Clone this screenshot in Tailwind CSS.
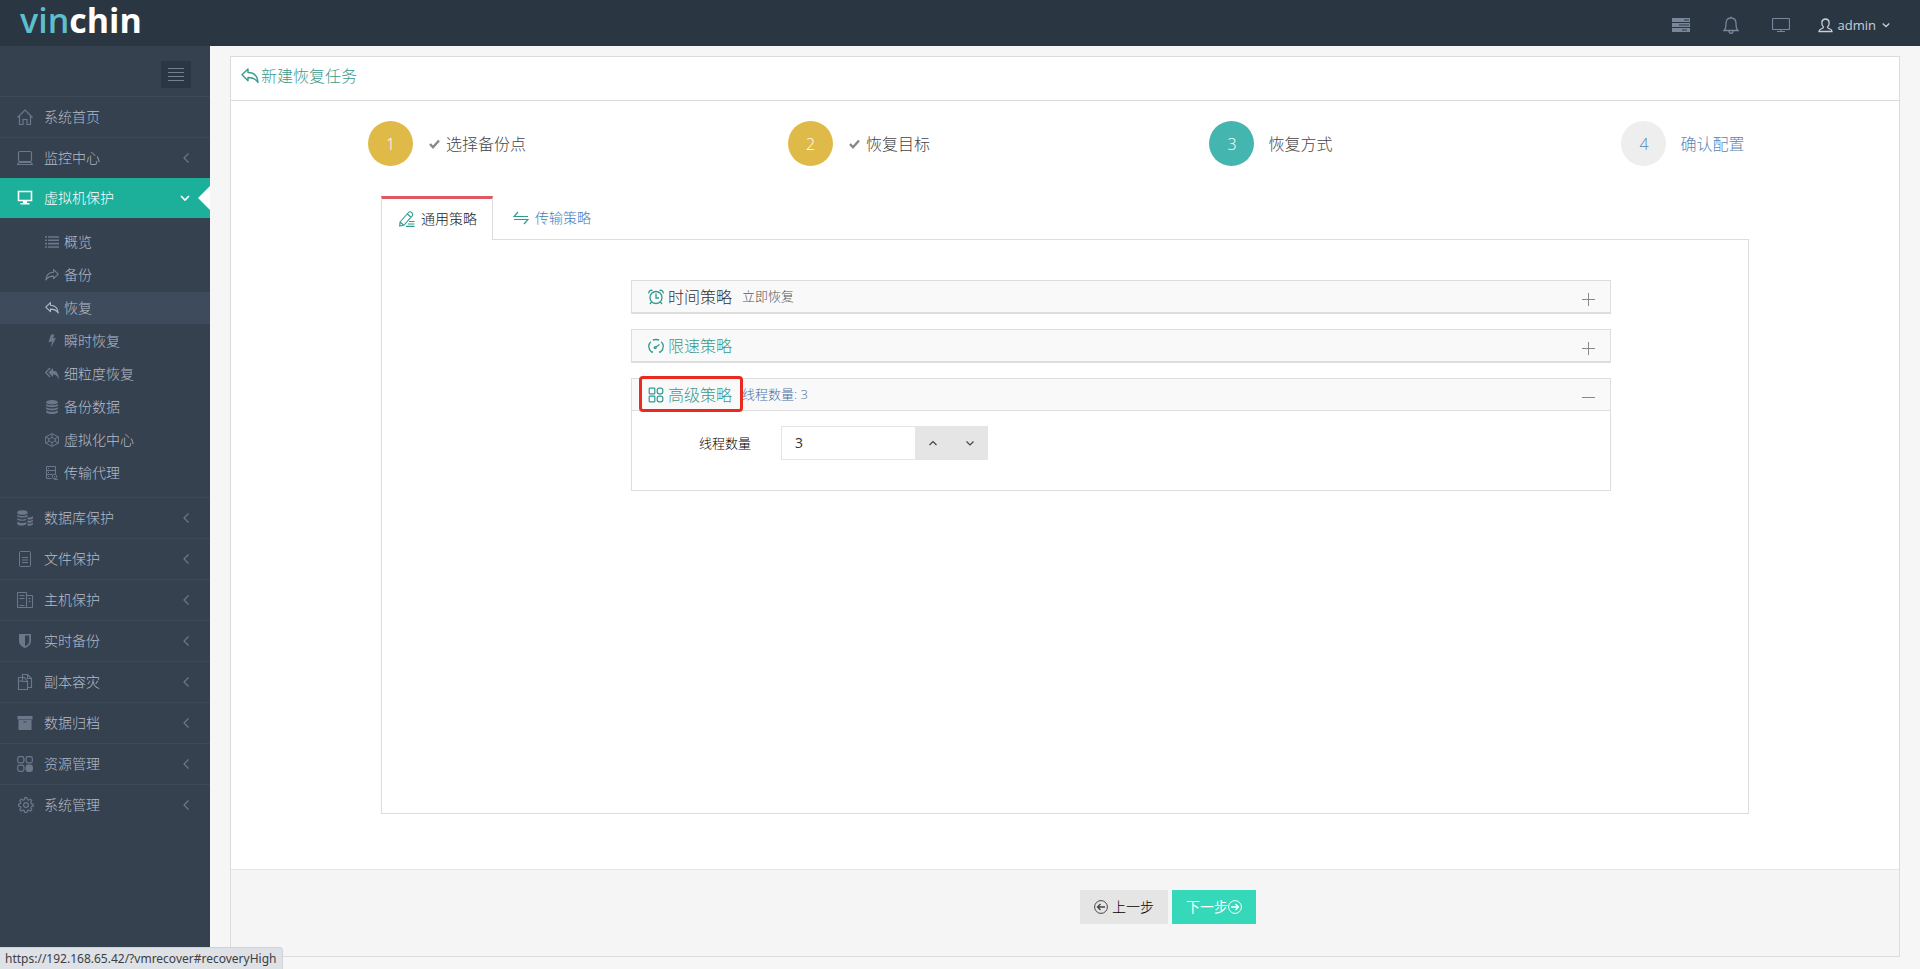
<!DOCTYPE html>
<html lang="zh-CN">
<head>
<meta charset="utf-8">
<meta name="viewport" content="width=device-width, initial-scale=1">
<title>新建恢复任务</title>
<script src="https://cdn.jsdelivr.net/npm/@tailwindcss/browser@4"></script>
</head>
<body class="flex min-h-screen flex-col bg-[#f6f6f6] font-['Open_Sans','Noto_Sans_CJK_SC',sans-serif] text-sm font-light text-[#333]">

<svg class="hidden" aria-hidden="true">
  <symbol id="left" viewBox="0 0 16 16"><path d="M10.500 3.500 6 8l4.500 4.500" fill="none" stroke="currentColor" stroke-width="1.200"/></symbol>
  <symbol id="reply" viewBox="0 0 18 16"><path d="M1 6.800 7 1v3.500c6 .1 9.500 3.200 10 10-2-3.500-4.500-5-10-5v3.300z" fill="none" stroke="currentColor" stroke-width="1.400" stroke-linejoin="round"/></symbol>
</svg>

<header class="flex h-[46px] items-center justify-between bg-[#2b3643] pr-[30px] pl-5">
  <a href="#" class="pb-1.5 text-[34px] leading-10 font-semibold text-[#5dbecd]" aria-label="vinchin">vin<span class="font-bold text-white">chin</span></a>
  <div class="flex items-center pt-1 text-[#79869a]">
    <button type="button" aria-label="任务" class="mr-[33px]"><svg class="h-4 w-[18px]" viewBox="0 0 18 16"><path d="M0 1h18v4H0zM0 6h18v4H0zM0 11h18v4H0z" fill="currentColor"/><path d="M12 3h5M7 8h10M10 13h5" stroke="#2b3643"/></svg></button>
    <button type="button" aria-label="通知" class="mr-[33px]"><svg class="h-[18px] w-4" viewBox="0 0 16 18" fill="none" stroke="currentColor" stroke-width="1.300"><path d="M1 14.500c2-1.500 2-3 2-7C3 3.500 5 2 8 2s5 1.500 5 5.500c0 4 0 5.500 2 7zM6 15c0 3 4 3 4 0M8 .5V2"/></svg></button>
    <button type="button" aria-label="监控" class="mr-7"><svg class="h-4 w-[18px]" viewBox="0 0 18 16" fill="none" stroke="currentColor" stroke-width="1.200"><path d="M1.500 1.500h15a1 1 0 0 1 1 1v9a1 1 0 0 1-1 1h-15a1 1 0 0 1-1-1v-9a1 1 0 0 1 1-1zM9 12.500v2M5 14.500h8"/></svg></button>
    <button type="button" class="flex items-center text-[13px] text-[#c6cfda]"><svg class="mr-[5px] h-[15px] w-[15px]" viewBox="0 0 15 15" fill="none" stroke="currentColor" stroke-width="1.300"><path d="M5.500 9C3 6.500 3 1 7.500 1S12 6.500 9.500 9c0 1 1 1.500 2.500 2 1.500.5 2 1 2 2.500H1C1 12 1.500 11.500 3 11s2.500-1 2.500-2z"/></svg><span class="font-normal">admin</span><svg class="ml-1.5 h-2 w-2" viewBox="0 0 8 8" fill="none" stroke="currentColor" stroke-width="1.300"><path d="m.7 2.500 3.300 3 3.300-3"/></svg></button>
  </div>
</header>

<div class="flex flex-1">
  <nav class="w-[210px] shrink-0 bg-[#364150] text-[#b4bcc8]">
    <div class="flex h-[50px] items-center justify-end pt-[7px] pr-[19px]">
      <button type="button" aria-label="折叠菜单" class="flex h-[27px] w-[30px] items-center justify-center bg-[#2b3643] text-[#748090]"><svg class="h-[13px] w-4" viewBox="0 0 16 13" stroke="currentColor"><path d="M0 .5h16M0 4.500h16M0 8.500h16M0 12.500h16"/></svg></button>
    </div>
    <ul>
      <li><a href="#" class="flex h-[41px] items-center border-t border-[#3d4957] pr-4 pl-[17px]"><svg class="mr-[11px] size-4 text-[#6c7889]" viewBox="0 0 16 16" fill="none" stroke="currentColor" stroke-width="1.200"><path d="M.5 8.500 8 1l7.500 7.500M2.500 7v8.500H6v-5h4v5h3.500V7"/></svg><span class="flex-1">系统首页</span></a></li>
      <li><a href="#" class="flex h-[41px] items-center border-t border-[#3d4957] pr-4 pl-[17px]"><svg class="mr-[11px] size-4 text-[#6c7889]" viewBox="0 0 16 16" fill="none" stroke="currentColor" stroke-width="1.200"><rect x="1.500" y="1.500" width="13" height="10" rx="1.500"/><path d="M.5 14.500h15l-1.500-2H2z"/></svg><span class="flex-1">监控中心</span><svg class="size-4 text-[#6c7889]"><use href="#left"/></svg></a></li>
      <li>
        <a href="#" class="flex h-10 items-center bg-[#1caf9a] pl-[17px] text-white"><svg class="mr-[11px] size-4" viewBox="0 0 16 16"><path d="M1.500 1.500h13v9h-13z" fill="none" stroke="currentColor" stroke-width="1.600"/><path d="M6 11h4v2h2.500v1.500h-9V13H6z" fill="currentColor"/></svg><span class="flex-1">虚拟机保护</span><svg class="mr-2 h-2.5 w-2.5" viewBox="0 0 10 10" fill="none" stroke="currentColor" stroke-width="1.600"><path d="m1 3 4 4 4-4"/></svg><svg class="h-6 w-3" viewBox="0 0 12 24"><path d="M12 0v24L0 12z" fill="#fff"/></svg></a>
        <ul class="flex flex-col gap-px py-2">
          <li><a href="#" class="flex h-8 items-center pl-[45px]"><svg class="mr-[5px] size-3.5 text-[#6c7889]" viewBox="0 0 14 14" stroke="currentColor" stroke-width="1.600"><path d="M0 2h2M3 2h11M0 5.300h2M3 5.300h11M0 8.600h2M3 8.600h11M0 12h2M3 12h11"/></svg>概览</a></li>
          <li><a href="#" class="flex h-8 items-center pl-[45px]"><svg class="mr-[5px] size-3.5 -scale-x-100 text-[#76828f]"><use href="#reply"/></svg>备份</a></li>
          <li><a href="#" class="flex h-8 items-center bg-[#3e4b5c] pl-[45px]" aria-current="page"><svg class="mr-[5px] size-3.5 text-[#b4bcc8]"><use href="#reply"/></svg>恢复</a></li>
          <li><a href="#" class="flex h-8 items-center pl-[45px]"><svg class="mr-[5px] size-3.5 text-[#6c7889]" viewBox="0 0 14 14"><path d="M6 .5h3.500L8 4.500l3-.5-5 9.500L7 7.500l-3.500.7z" fill="currentColor"/></svg>瞬时恢复</a></li>
          <li><a href="#" class="flex h-8 items-center pl-[45px]"><svg class="mr-[5px] size-3.5 text-[#6c7889]" viewBox="0 0 14 14"><path d="M3.500 5.500 8 1v2.700c4 0 6 3.300 5.700 9.300C12.500 9 11 7.500 8 7.500V10z" fill="currentColor"/><path d="M5 1 .7 5.500 5 10" fill="none" stroke="currentColor" stroke-width="1.300"/></svg>细粒度恢复</a></li>
          <li><a href="#" class="flex h-8 items-center pl-[45px]"><svg class="mr-[5px] size-3.5 text-[#6c7889]" viewBox="0 0 14 14" fill="currentColor"><ellipse cx="7" cy="2.200" rx="6" ry="2.200"/><path d="M1 4c2.500 1.800 9.500 1.800 12 0v1.500c-1.500 2.200-10.500 2.200-12 0zM1 7.200c2.500 1.800 9.500 1.800 12 0v1.500c-1.500 2.200-10.500 2.200-12 0zM1 10.400c2.500 1.800 9.500 1.800 12 0v1.500c-1.500 2.700-10.500 2.700-12 0z"/></svg>备份数据</a></li>
          <li><a href="#" class="flex h-8 items-center pl-[45px]"><svg class="mr-[5px] size-3.5 text-[#6c7889]" viewBox="0 0 14 14" fill="none" stroke="currentColor"><path d="M7 .6 13.400 4v6L7 13.400.6 10V4zM7 .6v4M7 9.400v4M.6 4 4 5.700M13.400 4 10 5.700M.6 10 4 8.300M13.400 10 10 8.300M7 4.300 11 7 7 9.700 3 7z"/></svg>虚拟化中心</a></li>
          <li><a href="#" class="flex h-8 items-center pl-[45px]"><svg class="mr-[5px] size-3.5 text-[#6c7889]" viewBox="0 0 14 14" fill="none" stroke="currentColor"><path d="M6.500 12.500h-5V.5h9v8M1.500 4.500h9M1.500 8.500h6M3 2.500h1M3 6.500h1M3 10.500h1"/><circle cx="9.500" cy="10.500" r="2.200"/><path d="M9 13.400h4M9 10.500h1"/></svg>传输代理</a></li>
        </ul>
      </li>
      <li><a href="#" class="flex h-[41px] items-center border-t border-[#3d4957] pr-4 pl-[17px]"><svg class="mr-[11px] size-4 text-[#6c7889]" viewBox="0 0 16 16" fill="currentColor"><ellipse cx="5.500" cy="2.500" rx="5.200" ry="2.300"/><path d="M.3 4.500c2 2 8.400 2 10.400 0V6c-1 2-9.400 2-10.400 0zM.3 8c2 1.800 7 2 9 .5V10c-2 1.200-8 1.200-9-.5zM.3 11.500c2 1.800 7 2 9 .5v2c-2 2-8 2-9 0zM10.500 7c2 1 4 .5 5.500-1v2c-1 1.800-4 2-5.500 1zM10.500 10.500c2 .5 4 .5 5.500-1v1.500c-1 1.800-4 2-5.500 1.500zM10.500 13.500c2 .5 4 .5 5.500-1V14c-1 1.800-4 2-5.500 1.500z"/></svg><span class="flex-1">数据库保护</span><svg class="size-4 text-[#6c7889]"><use href="#left"/></svg></a></li>
      <li><a href="#" class="flex h-[41px] items-center border-t border-[#3d4957] pr-4 pl-[17px]"><svg class="mr-[11px] size-4 text-[#6c7889]" viewBox="0 0 16 16" fill="none" stroke="currentColor"><rect x="2.500" y=".5" width="11" height="15" rx="1"/><path d="M5 6.500h6M5 9h6M5 11.500h6"/></svg><span class="flex-1">文件保护</span><svg class="size-4 text-[#6c7889]"><use href="#left"/></svg></a></li>
      <li><a href="#" class="flex h-[41px] items-center border-t border-[#3d4957] pr-4 pl-[17px]"><svg class="mr-[11px] size-4 text-[#6c7889]" viewBox="0 0 16 16" fill="none" stroke="currentColor"><path d="M.5.5h9v15h-9zM9.500 3.500h6v12h-6M2.500 3.500h5M2.500 6.500h5M2.500 13.500h5M11.500 6.500h2M11.500 9.500h2"/></svg><span class="flex-1">主机保护</span><svg class="size-4 text-[#6c7889]"><use href="#left"/></svg></a></li>
      <li><a href="#" class="flex h-[41px] items-center border-t border-[#3d4957] pr-4 pl-[17px]"><svg class="mr-[11px] size-4 text-[#6c7889]" viewBox="0 0 16 16"><path d="M2 1h12v7c0 3.500-2.500 5.500-6 7-3.500-1.500-6-3.500-6-7zm6 1.500v10.700c2.500-1.200 4.200-2.700 4.200-5V2.500z" fill="currentColor" fill-rule="evenodd"/></svg><span class="flex-1">实时备份</span><svg class="size-4 text-[#6c7889]"><use href="#left"/></svg></a></li>
      <li><a href="#" class="flex h-[41px] items-center border-t border-[#3d4957] pr-4 pl-[17px]"><svg class="mr-[11px] size-4 text-[#6c7889]" viewBox="0 0 16 16" fill="none" stroke="currentColor" stroke-width="1.100"><path d="M5.500 3.500h-4v12h9v-2M5.500 3.500V.5h5l4 4v9h-4v-6l-3-4zM10.500.5v4h4M1.500 7h4V3.500M5.500 7.500h5"/></svg><span class="flex-1">副本容灾</span><svg class="size-4 text-[#6c7889]"><use href="#left"/></svg></a></li>
      <li><a href="#" class="flex h-[41px] items-center border-t border-[#3d4957] pr-4 pl-[17px]"><svg class="mr-[11px] size-4 text-[#6c7889]" viewBox="0 0 16 16" fill="currentColor"><path d="M.5 1h15v3.500H.5zM1.500 5h13v10h-13zm5 1.500v1h3v-1z" fill-rule="evenodd"/></svg><span class="flex-1">数据归档</span><svg class="size-4 text-[#6c7889]"><use href="#left"/></svg></a></li>
      <li><a href="#" class="flex h-[41px] items-center border-t border-[#3d4957] pr-4 pl-[17px]"><svg class="mr-[11px] size-4 text-[#6c7889]" viewBox="0 0 16 16" fill="none" stroke="currentColor" stroke-width="1.200"><rect x=".7" y=".7" width="6.200" height="6.200" rx="1.800"/><rect x="9.100" y=".7" width="6.200" height="6.200" rx="1.800"/><rect x=".7" y="9.100" width="6.200" height="6.200" rx="1.800"/><rect x="9.100" y="9.100" width="6.200" height="6.200" rx="1.800" fill="currentColor"/></svg><span class="flex-1">资源管理</span><svg class="size-4 text-[#6c7889]"><use href="#left"/></svg></a></li>
      <li><a href="#" class="flex h-[41px] items-center border-t border-[#3d4957] pr-4 pl-[18px]"><svg class="mr-2.5 size-4 text-[#6c7889]" viewBox="0 0 16 16" fill="none" stroke="currentColor" stroke-width="1.200" stroke-linejoin="round"><path d="m6.700.7-.4 2-1.300.6-1.800-1.200-1.400 1.600 1 1.700-.5 1.300-1.800.4v2l1.800.4.6 1.300-1.100 1.800 1.500 1.500 1.700-1 1.300.5.4 2h2.200l.4-2 1.300-.6 1.800 1.200 1.400-1.600-1-1.700.5-1.300 1.900-.4v-2l-1.900-.4-.6-1.300 1.100-1.800-1.500-1.500-1.700 1-1.300-.5-.4-2z"/><circle cx="8" cy="8" r="2.400"/></svg><span class="flex-1">系统管理</span><svg class="size-4 text-[#6c7889]"><use href="#left"/></svg></a></li>
    </ul>
  </nav>

  <main class="flex min-w-0 flex-1 flex-col px-5 pt-2.5 pb-3">
    <section class="flex flex-1 flex-col border border-[#dcdcdc] bg-white">
      <h1 class="flex h-11 items-center border-b border-[#dcdcdc] px-2.5 pb-1.5 text-base text-[#3a9a8c]"><svg class="mr-0.5 h-4 w-[18px]"><use href="#reply"/></svg>新建恢复任务</h1>

      <ol class="grid grid-cols-4 px-2.5 pt-5 text-base text-[#444]">
        <li class="flex items-center justify-center"><span class="mr-4 flex size-[45px] items-center justify-center rounded-full bg-[#dfba49] text-white">1</span><svg class="mr-1.5 size-[11px] text-[#888]" viewBox="0 0 11 11"><path d="m1 6 3 3.200L10 2.500" fill="none" stroke="currentColor" stroke-width="2.400"/></svg>选择备份点</li>
        <li class="flex items-center justify-center"><span class="mr-4 flex size-[45px] items-center justify-center rounded-full bg-[#dfba49] text-white">2</span><svg class="mr-1.5 size-[11px] text-[#888]" viewBox="0 0 11 11"><path d="m1 6 3 3.200L10 2.500" fill="none" stroke="currentColor" stroke-width="2.400"/></svg>恢复目标</li>
        <li class="flex items-center justify-center"><span class="mr-3.5 flex size-[45px] items-center justify-center rounded-full bg-[#45b6af] text-white">3</span>恢复方式</li>
        <li class="flex items-center justify-center text-[#5b87b9]"><span class="mr-3.5 flex size-[45px] items-center justify-center rounded-full bg-[#eee]">4</span>确认配置</li>
      </ol>

      <div class="flex flex-1 flex-col px-[150px] pt-[30px] pb-[55px]">
        <div class="flex" role="tablist">
          <button type="button" role="tab" aria-selected="true" class="z-10 -mb-px flex h-11 items-center border-x border-t-3 border-x-[#ddd] border-t-[#dd5a62] bg-white pr-[15px] pb-0.5 pl-[17px] text-[#222]"><svg class="mr-1.5 h-4 w-4 text-[#2f9c91]" viewBox="0 0 16 16" fill="none" stroke="currentColor" stroke-width="1.100"><path d="m1 11 8.500-9.500a2 2 0 0 1 3 0l.7.7a2 2 0 0 1 0 2.600L5 14l-4.300 1zM8.500 3l3.700 3.500M1 11l3.500 3M10 10.500h5.500M9 13h6.500M7 15.400h8.500"/></svg>通用策略</button>
          <button type="button" role="tab" aria-selected="false" class="flex h-[43px] items-center px-5 text-[#3f7dbd]"><svg class="mr-1.5 h-4 w-4 text-[#2f9c91]" viewBox="0 0 16 16" fill="none" stroke="currentColor" stroke-width="1.200"><path d="M5 2 1 6.500h14M11 14l4-4.500H1"/></svg>传输策略</button>
        </div>

        <div role="tabpanel" class="flex flex-1 flex-col gap-[15px] border border-[#ddd] pt-10 pr-[137px] pb-12 pl-[249px]">
          <section class="flex h-[34px] items-center border border-b-2 border-[#ddd] bg-[#f9f9f9] pr-[15px] pl-4">
            <button type="button" class="flex flex-1 items-center text-base text-[#333]"><svg class="mr-1 h-4 w-4 text-[#2f9c91]" viewBox="0 0 16 16" fill="none" stroke="currentColor" stroke-width="1.300"><circle cx="8" cy="8.500" r="6"/><path d="M8 4.500V9h3M3.500 13 2 15M12.500 13l1.500 2M.8 4.500C.5 2 2.500.7 4.500 1.500M15.200 4.500c.3-2.500-1.700-3.800-3.700-3"/></svg>时间策略<span class="ml-2.5 text-[13px] text-[#555]">立即恢复</span></button>
            <svg class="mt-1.5 size-[13px] text-[#888]" viewBox="0 0 13 13" stroke="currentColor"><path d="M0 6.500h13M6.500 0v13"/></svg>
          </section>
          <section class="flex h-[34px] items-center border border-b-2 border-[#ddd] bg-[#f9f9f9] pr-[15px] pl-4">
            <button type="button" class="flex flex-1 items-center text-base text-[#3a9a8c]"><svg class="mr-1 h-4 w-4 text-[#2f9c91]" viewBox="0 0 16 16" fill="none" stroke="currentColor" stroke-width="1.300"><path d="M5 14H3.500C-.3 11 .2 6 2.800 3.700M4.800 2.200c2-.9 4.400-.9 6.400 0M13.200 3.700c2.600 2.300 3.100 7.300-.7 10.300H11"/><circle cx="7.200" cy="9.600" r="1"/><path d="m8 9 3.500-2.500"/></svg>限速策略</button>
            <svg class="mt-1.5 size-[13px] text-[#888]" viewBox="0 0 13 13" stroke="currentColor"><path d="M0 6.500h13M6.500 0v13"/></svg>
          </section>
          <section class="border border-[#ddd]">
            <div class="flex h-8 items-center border-b border-[#ddd] bg-[#f9f9f9] pr-[15px] pl-4">
              <button type="button" class="relative flex flex-1 items-center text-base text-[#3a9a8c]"><svg class="mr-1 h-4 w-4 text-[#2f9c91]" viewBox="0 0 16 16" fill="none" stroke="currentColor" stroke-width="1.200"><rect x="1.200" y="1.200" width="5.600" height="5.600" rx=".5"/><rect x="9.200" y="1.200" width="5.600" height="5.600" rx="2"/><rect x="1.200" y="9.200" width="5.600" height="5.600" rx=".5"/><rect x="9.200" y="9.200" width="5.600" height="5.600" rx="2"/></svg>高级策略<span class="ml-2.5 text-[13px] text-[#4a70a3]">线程数量: 3</span><span class="absolute -top-[7px] -left-[9px] h-9 w-[104px] rounded border-3 border-[#ea2a1f]"></span></button>
              <svg class="mt-1.5 size-[13px] text-[#888]" viewBox="0 0 13 13" stroke="currentColor"><path d="M0 6.500h13"/></svg>
            </div>
            <div class="flex items-center px-[15px] pt-[15px] pb-[30px]">
              <label for="threads" class="w-[104px] text-right text-[13px] text-black">线程数量</label>
              <div class="ml-[30px] flex h-[34px]">
                <input id="threads" type="text" value="3" class="w-[134px] border border-r-0 border-[#e5e5e5] bg-white px-[13px] text-sm font-normal text-[#333] outline-none">
                <button type="button" aria-label="增加" class="flex w-9 items-center justify-center bg-[#e5e5e5]"><svg class="size-2" viewBox="0 0 8 8" fill="none" stroke="#444" stroke-width="1.200"><path d="m.5 6 3.500-3.500L7.500 6"/></svg></button>
                <button type="button" aria-label="减少" class="flex w-[37px] items-center justify-center bg-[#e5e5e5]"><svg class="size-2" viewBox="0 0 8 8" fill="none" stroke="#444" stroke-width="1.200"><path d="M.5 2.500 4 6l3.500-3.500"/></svg></button>
              </div>
            </div>
          </section>
        </div>
      </div>

      <footer class="grid grid-cols-2 border-t border-[#e5e5e5] bg-[#f5f5f5] pt-5 pb-8">
        <div class="col-start-2 flex gap-1 px-[15px]">
          <button type="button" class="flex h-[34px] items-center bg-[#e5e5e5] px-3.5 text-black"><svg class="mr-1 size-3.5" viewBox="0 0 14 14" fill="none" stroke="#444"><circle cx="7" cy="7" r="6.400"/><path d="M11 7H3.500M6.500 4l-3 3 3 3" stroke-width="1.300"/></svg>上一步</button>
          <button type="button" class="flex h-[34px] items-center bg-[#35d8b8] px-3.5 font-normal text-white"><span>下一步</span><svg class="size-3.5" viewBox="0 0 14 14" fill="none" stroke="currentColor"><circle cx="7" cy="7" r="6.400"/><path d="M3 7h7.500M7.500 4l3 3-3 3" stroke-width="1.300"/></svg></button>
        </div>
      </footer>
    </section>
  </main>
</div>

<div role="status" class="fixed bottom-0 left-0 z-20 flex h-[22px] items-center rounded-tr border-t border-r border-[#cfd2d6] bg-[#dee1e6] pr-1.5 pl-[5px] font-['Noto_Sans',sans-serif] text-xs font-normal text-[#3c4043]">https://192.168.65.42/?vmrecover#recoveryHigh</div>
</body>
</html>
